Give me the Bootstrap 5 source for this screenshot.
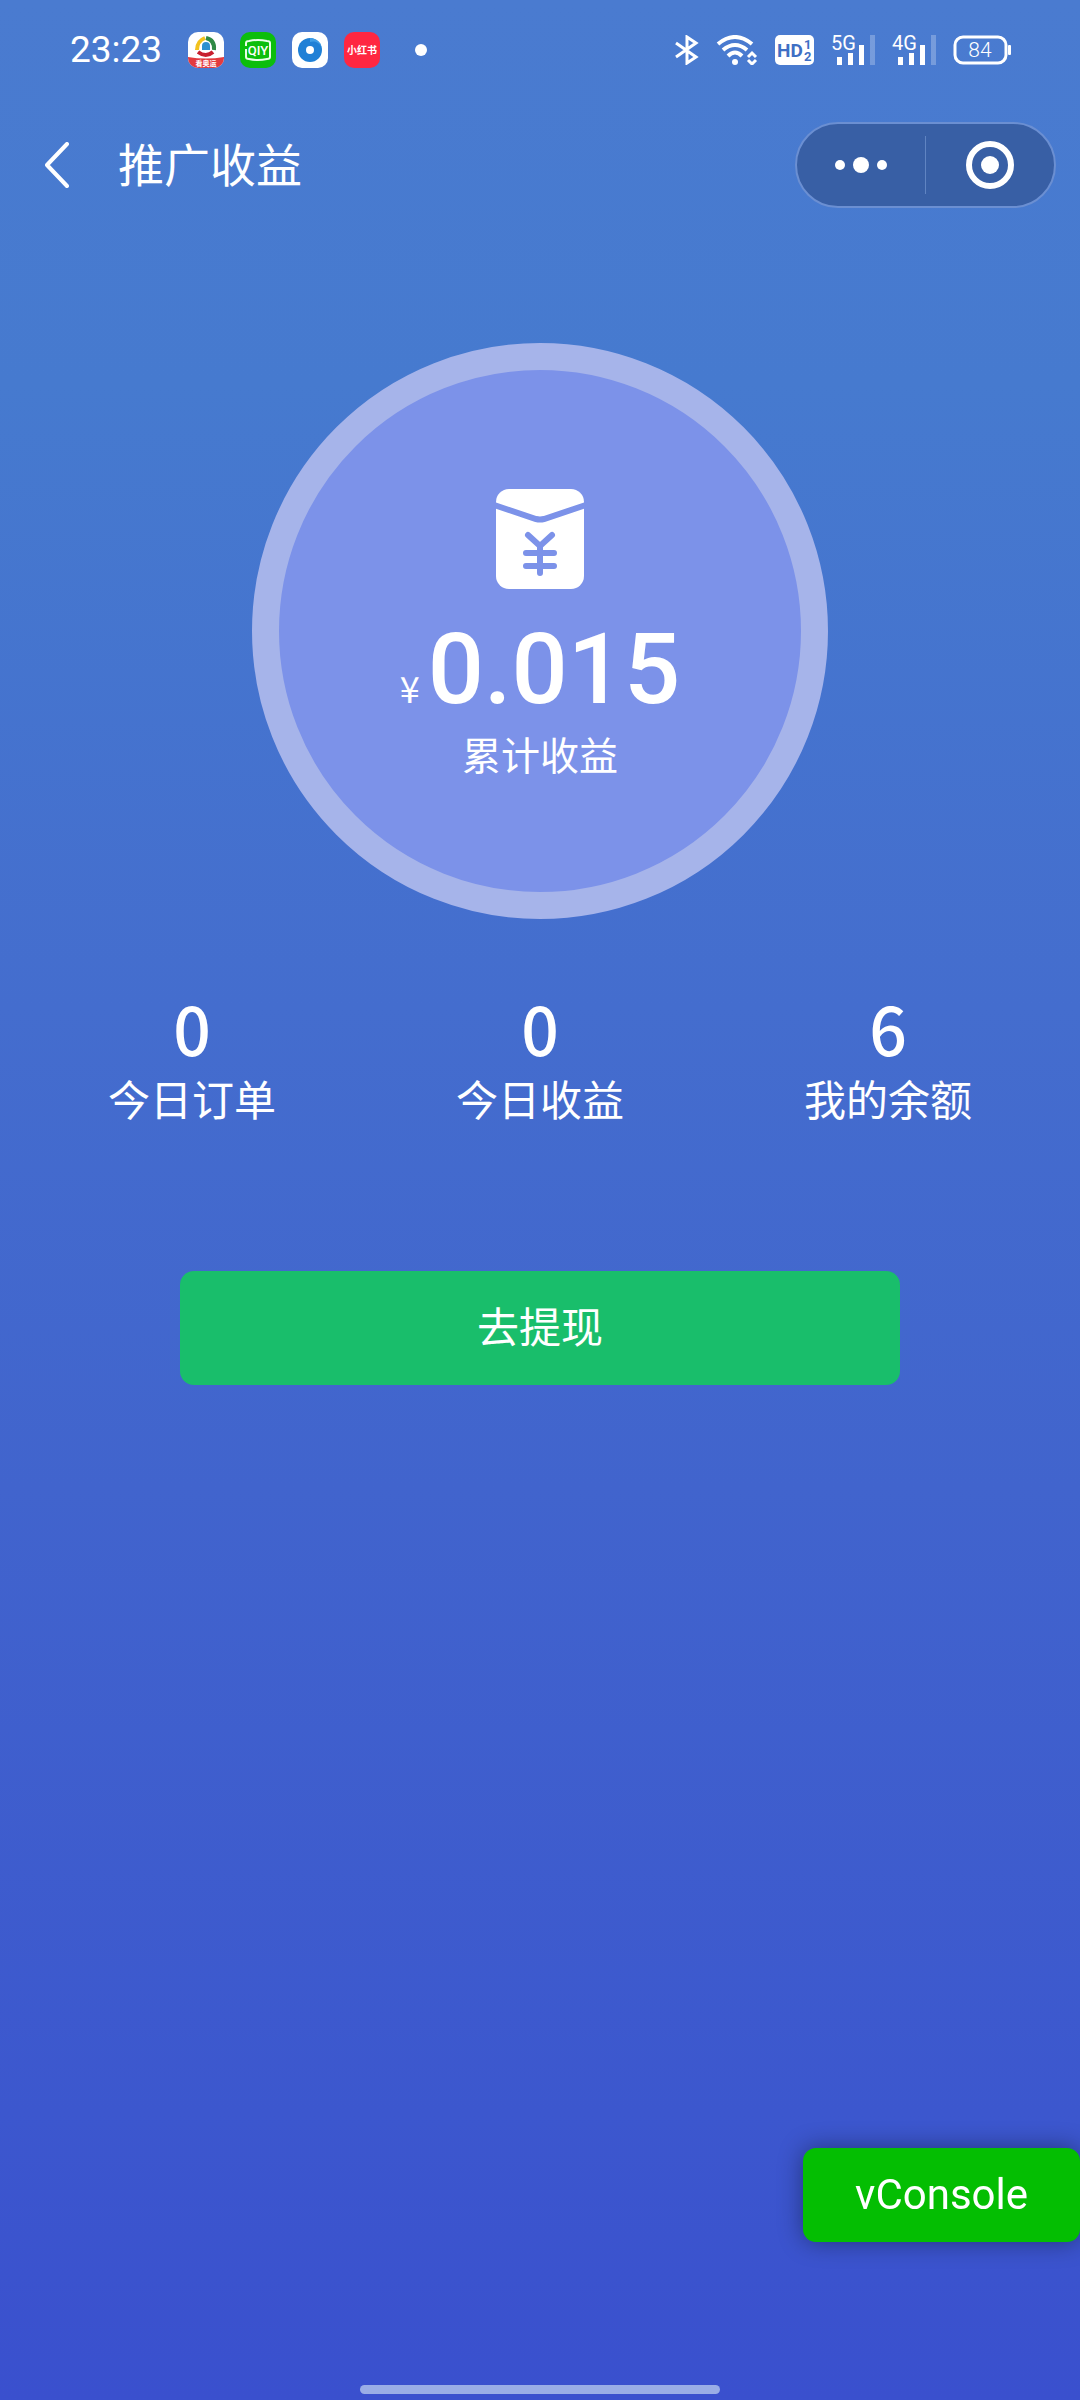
<!DOCTYPE html>
<html lang="zh-CN">
<head>
<meta charset="utf-8">
<meta name="viewport" content="width=device-width, initial-scale=1">
<title>推广收益</title>
<link rel="stylesheet" href="https://cdn.jsdelivr.net/npm/bootstrap@5.3.0/dist/css/bootstrap.min.css">
<style>
body {
  font-family: Roboto, "Noto Sans CJK SC", sans-serif;
  color: #fff;
  background: linear-gradient(180deg, #4a7bd0 0%, #467acf 16%, #446dce 42%, #4164cd 62%, #3c57ce 88%, #3a50ce 100%);
}
svg { display: block; flex: none; }
.status-bar { height: 100px; padding: 0 69px 0 70px; }
.clock { font-size: 37px; font-weight: 400; line-height: 40px; }
.app-icons { gap: 16px; margin-left: 26px; }
.more-dot { width: 12px; height: 12px; margin-left: 35px; }
.sys-icons { gap: 17px; }
.title-bar { height: 130px; padding: 0 24px 0 41px; }
.back-link { padding: 8px 4px; }
.page-title { font-size: 46px; line-height: 60px; margin: 2px 0 0 45px; font-weight: 400; }
.capsule { width: 261px; height: 86px; border: 2px solid #6b8fd2; border-radius: 43px; background: #385fa5; }
.capsule button { width: 50%; background: none; border: 0; padding: 0; }
.capsule-line { width: 1px; height: 58px; background: #6084c2; }
.total-ring { width: 576px; height: 576px; margin-top: 113px; padding-top: 119px; border: 27px solid #a6b4ea; background: #7c92e9; }
.amount-row { gap: 8px; height: 110px; margin-top: 30px; line-height: 100px; }
.currency { font-family: "Noto Sans CJK SC", sans-serif; font-size: 36px; font-weight: 400; }
.amount { font-size: 99px; font-weight: 500; }
.total-label { font-size: 39px; line-height: 56px; }
.stats { margin-top: 71px; padding: 0 18px; }
.stat-num { font-family: "Noto Sans CJK SC", sans-serif; font-size: 66px; font-weight: 500; line-height: 74px; }
.stat-label { font-size: 42px; line-height: 60px; margin-top: 8px; }
.withdraw { width: 720px; max-width: 90%; height: 114px; margin-top: 139px; border-radius: 14px; background: #19be6b; color: #fff; font-size: 42px; }
.withdraw:hover { background: #17ad61; color: #fff; }
.vc-switch { right: 0; bottom: 158px; height: 94px; padding: 0 52px; border: 0; border-radius: 13px; background: #04be02; color: #fff; font-size: 42px; line-height: 60px; box-shadow: 0 0 24px rgba(0,0,0,.4); }
.home-bar { width: 360px; height: 9px; margin-bottom: 6px; background: #9aade6; }
</style>
</head>
<body>
<div class="min-vh-100 d-flex flex-column">
  <div class="status-bar d-flex align-items-center">
    <span class="clock">23:23</span>
    <div class="app-icons d-flex">
      <svg width="36" height="36" viewBox="0 0 36 36">
        <clipPath id="tile"><rect width="36" height="36" rx="10"/></clipPath>
        <g clip-path="url(#tile)">
          <rect width="36" height="36" fill="#fff"/>
          <path d="M0 25Q18 28 36 25V36H0Z" fill="#e33b3f"/>
          <path d="M9 18Q9 9 17 6" fill="none" stroke="#f2c21d" stroke-width="4"/>
          <path d="M18 6Q27 8 26 18" fill="none" stroke="#2f8a45" stroke-width="4"/>
          <path d="M25 20Q18 26 10 20" fill="none" stroke="#c8202f" stroke-width="4"/>
          <path d="M14 18V14A4 4 0 0 1 22 14V18Z" fill="#2b8fd0"/>
          <text x="18" y="34" font-size="7" font-weight="700" text-anchor="middle" fill="#fff">看奥运</text>
        </g>
      </svg>
      <svg width="36" height="36" viewBox="0 0 36 36">
        <rect width="36" height="36" rx="10" fill="#0cbe0c"/>
        <path d="M6 14V11Q6 9 9 9Q18 7 27 9Q30 9 30 11V25Q30 27 27 27Q18 29 9 27Q6 27 6 25V17" fill="none" stroke="#e9ffe9" stroke-width="2"/>
        <text x="18" y="23" font-size="13" font-weight="500" text-anchor="middle" fill="#fff">QIY</text>
      </svg>
      <svg width="36" height="36" viewBox="0 0 36 36">
        <rect width="36" height="36" rx="10" fill="#fff"/>
        <circle cx="18" cy="18" r="12" fill="#1f80d6"/>
        <path d="M18 6A12 12 0 0 1 30 18A9 9 0 0 0 18 10Z" fill="#3f9de6"/>
        <circle cx="18" cy="18" r="4" fill="#fff"/>
      </svg>
      <svg width="36" height="36" viewBox="0 0 36 36">
        <rect width="36" height="36" rx="10" fill="#ff2741"/>
        <text x="18" y="22" font-size="10" font-weight="700" text-anchor="middle" fill="#fff">小红书</text>
      </svg>
    </div>
    <span class="more-dot rounded-circle bg-white"></span>
    <div class="sys-icons d-flex align-items-center ms-auto">
      <svg width="24" height="30" viewBox="0 0 24 30" fill="none" stroke="#fff" stroke-width="3">
        <path d="M1 8L21 22L12 28V2L21 8L1 22"/>
      </svg>
      <svg width="42" height="30" viewBox="0 0 42 30" fill="none" stroke="#fff" stroke-width="4">
        <path d="M2 9Q19 -5 36 9M7 15Q19 5 31 15M12 21Q19 14 26 21"/>
        <circle cx="19" cy="27" r="3" fill="#fff" stroke="none"/>
        <path d="M32 22L36 18L40 22M32 25L36 29L40 25" stroke-width="3"/>
      </svg>
      <svg width="39" height="30" viewBox="0 0 39 30" fill="#3f6fc4" font-weight="700">
        <rect width="39" height="30" rx="5" fill="#fff"/>
        <text x="2" y="22" font-size="19">HD</text>
        <text x="29" y="14" font-size="13">1</text>
        <text x="29" y="26" font-size="13">2</text>
      </svg>
      <svg width="44" height="38" viewBox="0 -4 44 38" fill="#fff">
        <text x="0" y="15" font-size="20">5G</text>
        <rect x="6" y="22" width="5" height="8"/><rect x="17" y="18" width="5" height="12"/><rect x="28" y="10" width="5" height="20"/>
        <rect x="39" width="5" height="30" opacity=".25"/>
      </svg>
      <svg width="44" height="38" viewBox="0 -4 44 38" fill="#fff">
        <text x="0" y="15" font-size="20">4G</text>
        <rect x="6" y="22" width="5" height="8"/><rect x="17" y="18" width="5" height="12"/><rect x="28" y="10" width="5" height="20"/>
        <rect x="39" width="5" height="30" opacity=".25"/>
      </svg>
      <svg width="58" height="30" viewBox="0 0 58 30" fill="#fff">
        <rect x="2" y="2" width="51" height="26" rx="8" fill="none" stroke="#fff" stroke-width="3"/>
        <rect x="55" y="10" width="3" height="10" rx="1"/>
        <text x="27" y="22" font-size="21" font-weight="300" text-anchor="middle">84</text>
      </svg>
    </div>
  </div>

  <header class="title-bar d-flex align-items-center">
    <a class="back-link" href="#" aria-label="返回">
      <svg width="24" height="46" viewBox="0 0 24 46" fill="none" stroke="#fff" stroke-width="4" stroke-linecap="round" stroke-linejoin="round">
        <path d="M22 2L2 23L22 44"/>
      </svg>
    </a>
    <h1 class="page-title">推广收益</h1>
    <div class="capsule d-flex align-items-center ms-auto">
      <button class="d-flex justify-content-center" type="button" aria-label="更多">
        <svg width="52" height="18" viewBox="0 0 52 18" fill="#fff"><circle cx="5" cy="9" r="5"/><circle cx="26" cy="9" r="8"/><circle cx="47" cy="9" r="5"/></svg>
      </button>
      <span class="capsule-line"></span>
      <button class="d-flex justify-content-center" type="button" aria-label="关闭">
        <svg width="48" height="48" viewBox="0 0 48 48"><circle cx="24" cy="24" r="21" fill="none" stroke="#fff" stroke-width="6"/><circle cx="24" cy="24" r="9" fill="#fff"/></svg>
      </button>
    </div>
  </header>

  <main class="d-flex flex-column align-items-center">
    <section class="total-ring rounded-circle d-flex flex-column align-items-center">
      <svg width="88" height="100" viewBox="0 0 88 100">
        <rect width="88" height="100" rx="13" fill="#fff"/>
        <g fill="none" stroke="#7c92e9" stroke-width="6">
          <path d="M-2 16L40 30Q44 31 48 30L90 16"/>
          <path d="M32 46L44 57L56 46M44 57V84M30 64H58M30 77H58" stroke-linecap="round" stroke-width="6"/>
        </g>
      </svg>
      <div class="amount-row d-flex align-items-baseline">
        <span class="currency">¥</span><span class="amount">0.015</span>
      </div>
      <div class="total-label">累计收益</div>
    </section>

    <div class="stats row g-0 w-100 text-center">
      <div class="col-4"><div class="stat-num">0</div><div class="stat-label">今日订单</div></div>
      <div class="col-4"><div class="stat-num">0</div><div class="stat-label">今日收益</div></div>
      <div class="col-4"><div class="stat-num">6</div><div class="stat-label">我的余额</div></div>
    </div>

    <button class="withdraw btn" type="button">去提现</button>
  </main>

  <div class="home-bar rounded-pill mt-auto mx-auto"></div>
</div>
<button class="vc-switch position-fixed" type="button">vConsole</button>
<script src="https://cdn.jsdelivr.net/npm/bootstrap@5.3.0/dist/js/bootstrap.bundle.min.js"></script>
</body>
</html>
